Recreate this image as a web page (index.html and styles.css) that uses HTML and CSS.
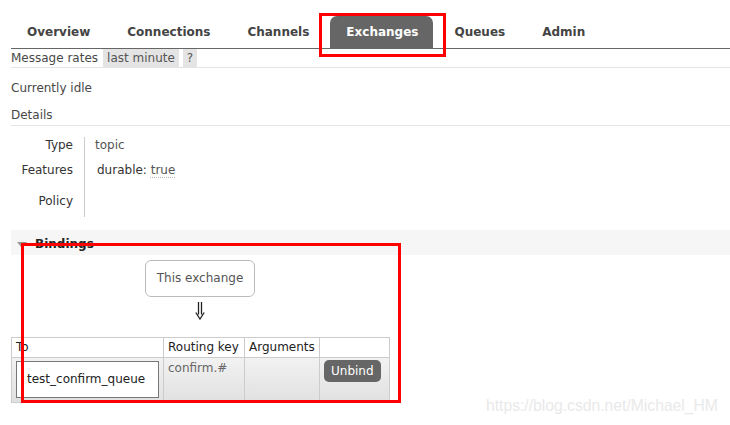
FILE: index.html
```html
<!DOCTYPE html>
<html>
<head>
<meta charset="utf-8">
<link rel="stylesheet" href="styles.css">
</head>
<body>
<div class="page">
  <ul class="tabs">
    <li class="tab">Overview</li>
    <li class="tab">Connections</li>
    <li class="tab">Channels</li>
    <li class="tab active">Exchanges</li>
    <li class="tab">Queues</li>
    <li class="tab">Admin</li>
  </ul>
  <div class="rates">
    <span class="rates-label">Message rates</span>
    <span class="pill">last minute</span>
    <span class="pill">?</span>
  </div>
  <p class="idle">Currently idle</p>
  <h3 class="section">Details</h3>
  <div class="facts">
    <div class="fact-label">Type</div>
    <div class="fact-value">topic</div>
    <div class="fact-label">Features</div>
    <div class="fact-value feat">durable: <span class="dotted">true</span></div>
    <div class="fact-label">Policy</div>
    <div class="fact-value"></div>
  </div>
  <div class="bindings-head"><span class="tri"></span><span class="bh-text">Bindings</span></div>
  <div class="bindings">
    <div class="diagram">
      <div class="this-ex">This exchange</div>
      <svg class="arrow" width="10" height="18" viewBox="0 0 10 18">
        <path d="M3.5 0 V12.5 M6.5 0 V12.5 M0.8 10.5 L5 17 L9.2 10.5" fill="none" stroke="#222" stroke-width="1.3"/>
      </svg>
    </div>
    <table class="btable">
      <thead>
        <tr><th class="c1">To</th><th class="c2">Routing key</th><th class="c3">Arguments</th><th class="c4"></th></tr>
      </thead>
      <tbody>
        <tr>
          <td><div class="qbox">test_confirm_queue</div></td>
          <td class="rk">confirm.#</td>
          <td></td>
          <td><span class="btn">Unbind</span></td>
        </tr>
      </tbody>
    </table>
  </div>
</div>
<div class="annot annot-tab"></div>
<div class="annot annot-bind"></div>
<div class="watermark">https://blog.csdn.net/Michael_HM</div>
</body>
</html>
```
FILE: styles.css
```css
html, body {
  margin: 0;
  padding: 0;
  background: #fff;
}
body {
  font-family: "DejaVu Sans", Verdana, sans-serif;
  font-size: 12px;
  color: #484848;
  width: 730px;
  height: 425px;
  overflow: hidden;
  position: relative;
}
.page {
  padding-left: 11px;
}
.tabs {
  list-style: none;
  margin: 0;
  padding: 16px 0 0 0;
  display: flex;
  gap: 5px;
  border-bottom: 1px solid #666;
}
.tab {
  height: 32px;
  line-height: 33px;
  padding: 0 16px;
  font-weight: bold;
  color: #444;
}
.tab.active {
  background: #666;
  color: #fff;
  border-radius: 7px 7px 0 0;
  padding: 0 15px 0 16px;
}
.rates {
  display: flex;
  align-items: center;
  height: 18px;
  line-height: 18px;
  border-bottom: 1px solid #e4e4e4;
}
.rates-label {
  margin-right: 5px;
}
.pill {
  background: #e4e4e4;
  padding: 0 4px;
  margin-right: 4px;
  color: #555;
}
.idle {
  margin: 10px 0 0;
  line-height: 20px;
}
.section {
  margin: 7px 0 0;
  font-size: 12px;
  font-weight: normal;
  line-height: 20px;
  border-bottom: 1px solid #e4e4e4;
}
.facts {
  margin-top: 11px;
  display: grid;
  grid-template-columns: 73px auto;
  grid-template-rows: 25px 31px 24px;
  line-height: 16px;
}
.fact-label {
  text-align: right;
  padding-right: 11px;
  color: #333;
}
.fact-value {
  border-left: 1px solid #ccc;
  padding-left: 10px;
  color: #555;
}
.fact-value.feat {
  padding-left: 12px;
  color: #333;
}
.dotted {
  color: #555;
  text-decoration: underline dotted #bbb;
  text-underline-offset: 3px;
}
.bindings-head {
  margin-top: 13px;
  height: 25px;
  background: #f6f6f6;
  font-weight: bold;
  color: #222;
  display: flex;
  align-items: center;
}
.bh-text {
  padding-top: 2px;
}
.tri {
  display: inline-block;
  width: 0;
  height: 0;
  border-left: 5.5px solid transparent;
  border-right: 5.5px solid transparent;
  border-top: 6px solid #999;
  margin: 4px 8px 0 6px;
}
.bindings {
  margin-top: 5px;
  width: 378px;
}
.diagram {
  display: flex;
  flex-direction: column;
  align-items: center;
}
.this-ex {
  height: 37px;
  box-sizing: border-box;
  line-height: 35px;
  padding: 0 11px;
  border: 1px solid #bbb;
  border-radius: 6px;
  color: #555;
}
.arrow {
  display: block;
  margin: 5px 0 17px;
}
.btable {
  border-collapse: collapse;
  width: 378px;
  table-layout: fixed;
}
.btable th, .btable td {
  border: 1px solid #ccc;
  padding: 2px 4px;
  text-align: left;
  vertical-align: top;
}
.btable th {
  font-weight: normal;
  color: #222;
  height: 15px;
  line-height: 15px;
  background: #fff;
}
.c1 { width: 143px; }
.c2 { width: 72px; }
.c3 { width: 66px; }
.c4 { width: 61px; }
.btable tbody tr {
  background: linear-gradient(#f2f2f2, #e0e0e0);
}
.btable td {
  height: 40px;
  line-height: 16px;
}
.qbox {
  box-sizing: border-box;
  width: 143px;
  height: 37px;
  line-height: 35px;
  padding: 0 10px;
  border: 1px solid #777;
  background: #fff;
  color: #222;
  margin-top: 1px;
}
.rk {
  color: #666;
}
.btn {
  display: inline-block;
  height: 22px;
  line-height: 22px;
  padding: 0 7px;
  background: #666;
  color: #fff;
  border-radius: 5px;
}
.annot {
  position: absolute;
  box-sizing: border-box;
  border: 3px solid #f00;
}
.annot-tab {
  left: 319px;
  top: 13px;
  width: 127px;
  height: 44px;
}
.annot-bind {
  left: 21px;
  top: 243px;
  width: 380px;
  height: 160px;
}
.watermark {
  position: absolute;
  left: 486px;
  top: 397px;
  font-family: "Liberation Sans", Arial, sans-serif;
  font-size: 15.7px;
  color: #e9e9e9;
  white-space: nowrap;
}
```
